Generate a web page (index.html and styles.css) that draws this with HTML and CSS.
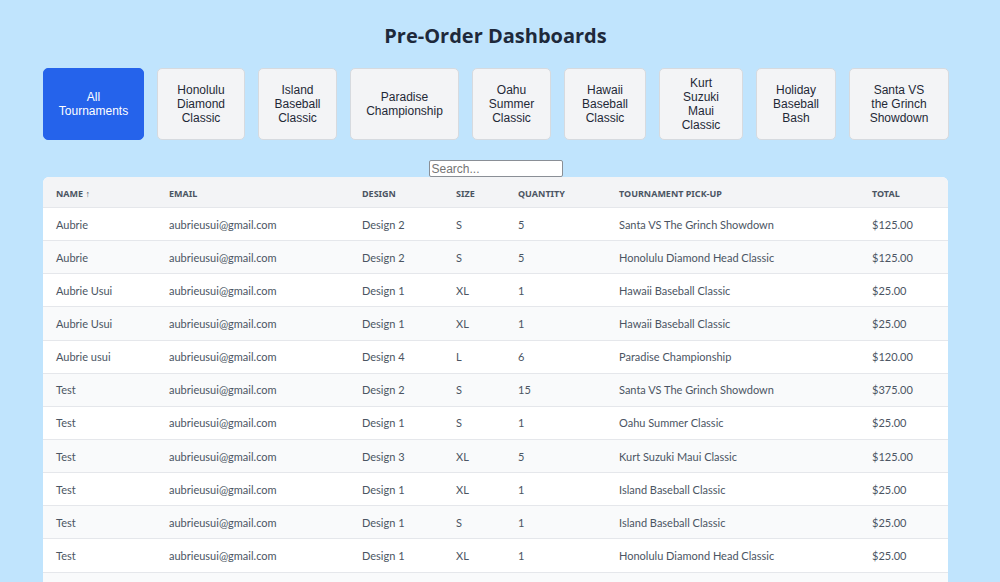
FILE: index.html
```html
<!DOCTYPE html>
<html>
<head>
<meta charset="utf-8">
<link rel="stylesheet" href="styles.css">
</head>
<body>
<div class="page">
  <h1 class="title">Pre-Order Dashboards</h1>
  <div class="filters">
    <button class="filter active">All Tournaments</button>
    <button class="filter">Honolulu Diamond Classic</button>
    <button class="filter">Island Baseball Classic</button>
    <button class="filter">Paradise Championship</button>
    <button class="filter">Oahu Summer Classic</button>
    <button class="filter">Hawaii Baseball Classic</button>
    <button class="filter">Kurt Suzuki Maui Classic</button>
    <button class="filter">Holiday Baseball Bash</button>
    <button class="filter">Santa VS the Grinch Showdown</button>
  </div>
  <div class="search-row">
    <input class="search" type="text" placeholder="Search...">
  </div>
  <div class="table-wrap">
    <table class="orders">
      <colgroup>
        <col class="c-name"><col class="c-email"><col class="c-design"><col class="c-size"><col class="c-qty"><col class="c-tour"><col class="c-total">
      </colgroup>
      <thead>
        <tr><th>Name ↑</th><th>Email</th><th>Design</th><th>Size</th><th>Quantity</th><th>Tournament Pick-Up</th><th>Total</th></tr>
      </thead>
      <tbody>
        <tr><td>Aubrie</td><td>aubrieusui@gmail.com</td><td>Design 2</td><td>S</td><td>5</td><td>Santa VS The Grinch Showdown</td><td>$125.00</td></tr>
        <tr><td>Aubrie</td><td>aubrieusui@gmail.com</td><td>Design 2</td><td>S</td><td>5</td><td>Honolulu Diamond Head Classic</td><td>$125.00</td></tr>
        <tr><td>Aubrie Usui</td><td>aubrieusui@gmail.com</td><td>Design 1</td><td>XL</td><td>1</td><td>Hawaii Baseball Classic</td><td>$25.00</td></tr>
        <tr><td>Aubrie Usui</td><td>aubrieusui@gmail.com</td><td>Design 1</td><td>XL</td><td>1</td><td>Hawaii Baseball Classic</td><td>$25.00</td></tr>
        <tr><td>Aubrie usui</td><td>aubrieusui@gmail.com</td><td>Design 4</td><td>L</td><td>6</td><td>Paradise Championship</td><td>$120.00</td></tr>
        <tr><td>Test</td><td>aubrieusui@gmail.com</td><td>Design 2</td><td>S</td><td>15</td><td>Santa VS The Grinch Showdown</td><td>$375.00</td></tr>
        <tr><td>Test</td><td>aubrieusui@gmail.com</td><td>Design 1</td><td>S</td><td>1</td><td>Oahu Summer Classic</td><td>$25.00</td></tr>
        <tr><td>Test</td><td>aubrieusui@gmail.com</td><td>Design 3</td><td>XL</td><td>5</td><td>Kurt Suzuki Maui Classic</td><td>$125.00</td></tr>
        <tr><td>Test</td><td>aubrieusui@gmail.com</td><td>Design 1</td><td>XL</td><td>1</td><td>Island Baseball Classic</td><td>$25.00</td></tr>
        <tr><td>Test</td><td>aubrieusui@gmail.com</td><td>Design 1</td><td>S</td><td>1</td><td>Island Baseball Classic</td><td>$25.00</td></tr>
        <tr><td>Test</td><td>aubrieusui@gmail.com</td><td>Design 1</td><td>XL</td><td>1</td><td>Honolulu Diamond Head Classic</td><td>$25.00</td></tr>
        <tr class="empty-row"><td></td><td></td><td></td><td></td><td></td><td></td><td></td></tr>
      </tbody>
    </table>
  </div>
</div>
</body>
</html>
```
FILE: styles.css
```css
html, body {
  margin: 0;
  padding: 0;
  background: #c0e4fd;
  overflow: hidden;
}
.page {
  width: 905px;
  margin-left: 43px;
  padding-top: 22px;
}
.title {
  margin: 0 0 18px;
  text-align: center;
  font-family: "Open Sans", sans-serif;
  font-weight: 700;
  font-size: 20px;
  line-height: 28px;
  color: #1e293b;
}
.filters {
  display: grid;
  grid-template-columns: 101px 88px 79px 109px 79px 82px 84px 80px 100px;
  column-gap: 13px;
  height: 72px;
}
.filter {
  margin: 0;
  padding: 0 14px;
  height: 72px;
  border: 1px solid #d6dadf;
  border-radius: 5px;
  background: #f3f4f6;
  color: #1f2937;
  font-family: "Liberation Sans", Arial, sans-serif;
  font-size: 12px;
  line-height: normal;
  text-align: center;
}
.filter.active {
  background: #2563eb;
  border-color: #2563eb;
  color: #ffffff;
}
.search-row {
  display: flex;
  justify-content: center;
  padding-top: 20px;
}
.search {
  width: 134px;
  height: 17px;
  box-sizing: border-box;
  margin: 0;
  padding: 0 2px;
  border: 1px solid #8a8f96;
  border-radius: 2px;
  background: #ffffff;
  font-family: "Liberation Sans", Arial, sans-serif;
  font-size: 12px;
  color: #333;
}
.search::placeholder {
  color: #757575;
}
.table-wrap {
  background: #ffffff;
  border-radius: 6px 6px 0 0;
  overflow: hidden;
}
.orders {
  width: 100%;
  border-collapse: collapse;
  table-layout: fixed;
  font-family: Lato, "Noto Sans", sans-serif;
}
.c-name { width: 113px; }
.c-email { width: 193px; }
.c-design { width: 94px; }
.c-size { width: 62px; }
.c-qty { width: 101px; }
.c-tour { width: 253px; }
.c-total { width: 89px; }
.orders th {
  background: #f3f4f6;
  height: 28px;
  padding: 2px 0 0 13px;
  text-align: left;
  font-family: "Noto Sans", sans-serif;
  font-size: 9px;
  font-weight: 700;
  text-transform: uppercase;
  color: #4b5563;
  border-bottom: 1px solid #e5e7eb;
}
.orders td {
  height: 32.15px;
  padding: 0 0 0 13px;
  font-size: 11px;
  color: #4b5563;
  border-bottom: 1px solid #e5e7eb;
  white-space: nowrap;
}
.orders tbody tr:nth-child(even) td {
  background: #f9fafb;
}
```
